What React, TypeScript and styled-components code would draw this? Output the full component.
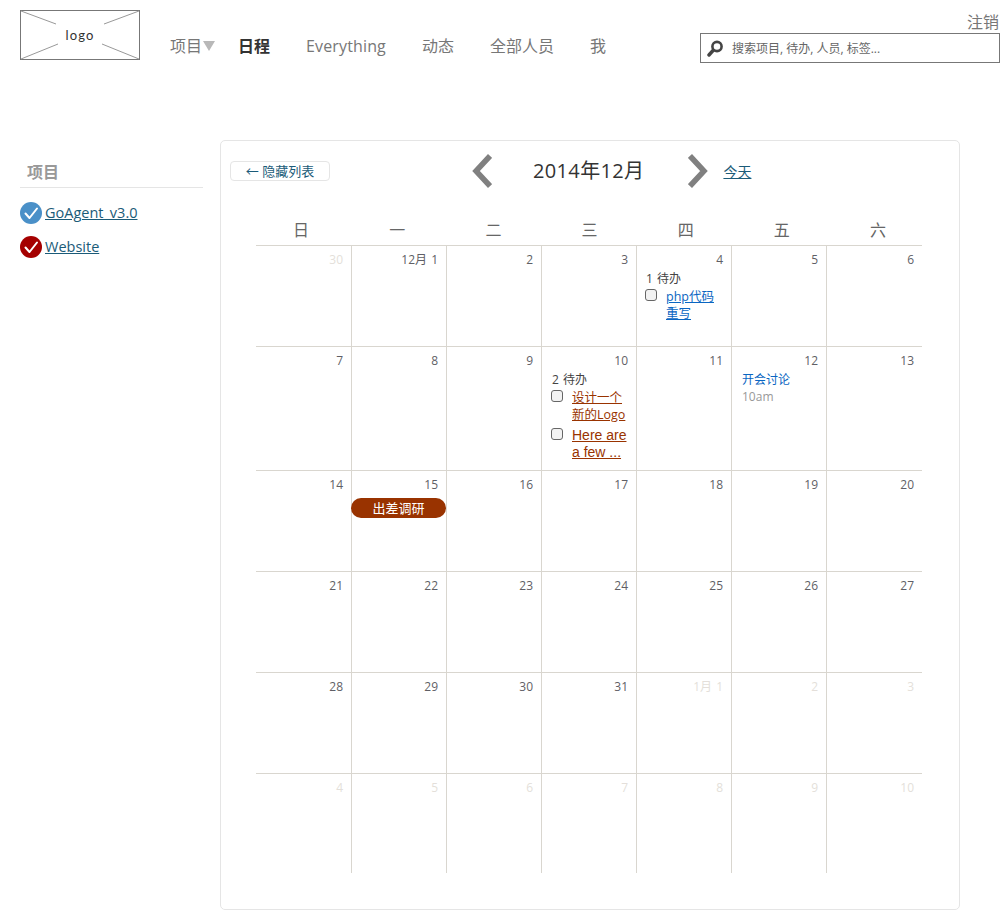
import React from "react";
import styled, { createGlobalStyle } from "styled-components";

const Global = createGlobalStyle`
  html, body { margin: 0; padding: 0; background: #fff; }
  body { font-family: "Open Sans", "Noto Sans CJK SC", sans-serif; color: #333; }
`;

const Page = styled.div`
  width: 1000px;
  height: 910px;
  overflow: hidden;
`;

const Header = styled.header`
  display: flex;
  height: 140px;
  box-sizing: border-box;
  padding: 10px 0 0 20px;
`;

const Logo = styled.div`
  position: relative;
  width: 120px;
  height: 50px;
  display: flex;
  align-items: center;
  justify-content: center;
  font-family: "Lato", "Open Sans", sans-serif;
  font-size: 13px;
  letter-spacing: 1.2px;
  color: #333;
  svg { position: absolute; inset: 0; }
  span { position: relative; margin-top: -1px; }
`;

const Nav = styled.nav`
  display: flex;
  gap: 36px;
  align-items: center;
  height: 24px;
  margin: 24px 0 0 30px;
`;

const NavItem = styled.a<{ $active?: boolean }>`
  font-size: 16px;
  line-height: 24px;
  color: ${(p) => (p.$active ? "#333" : "#777")};
  font-weight: ${(p) => (p.$active ? 700 : 400)};
`;

const NavLatin = styled(NavItem)`
  letter-spacing: 0.14px;
`;

const NavDrop = styled(NavItem)`
  display: flex;
  align-items: center;
  margin-right: -13px;
  &::after {
    content: "";
    width: 0;
    height: 0;
    margin-left: 1px;
    border-left: 6px solid transparent;
    border-right: 6px solid transparent;
    border-top: 10px solid #b8b8b8;
  }
`;

const Account = styled.div`
  margin-left: auto;
  width: 300px;
  display: flex;
  flex-direction: column;
  align-items: flex-end;
  margin-top: 2px;
`;

const Logout = styled.a`
  font-size: 16px;
  line-height: 20px;
  color: #777;
  margin-right: 1px;
`;

const Search = styled.div`
  width: 300px;
  height: 30px;
  margin-top: 1px;
  box-sizing: border-box;
  border: 1px solid #777;
  display: flex;
  align-items: center;
  padding-left: 6px;
  gap: 9px;
`;

const SearchText = styled.span`
  font-size: 12px;
  color: #666;
`;

const Body = styled.main`
  display: flex;
  padding-left: 20px;
`;

const Sidebar = styled.aside`
  width: 183px;
  margin-right: 17px;
  padding-top: 20px;
  flex: none;
`;

const SideTitle = styled.h2`
  margin: 0;
  padding: 0 0 3px 7px;
  font-size: 16px;
  line-height: 24px;
  font-weight: 700;
  color: #999;
  border-bottom: 1px solid #e5e5e5;
`;

const ProjectList = styled.ul`
  list-style: none;
  margin: 14px 0 0;
  padding: 0;
  display: flex;
  flex-direction: column;
  gap: 12px;
`;

const Project = styled.li`
  display: flex;
  align-items: center;
  gap: 3px;
  height: 22px;
`;

const TealLink = styled.a`
  color: #1b5b78;
  text-decoration: underline;
`;

const ProjectLink = styled(TealLink)`
  font-size: 14.5px;
  line-height: 20px;
`;

const Panel = styled.section`
  width: 740px;
  height: 770px;
  box-sizing: border-box;
  border: 1px solid #e5e5e5;
  border-radius: 5px;
  padding: 13px 0 0 9px;
`;

const Toolbar = styled.div`
  display: flex;
  align-items: center;
  height: 34px;
`;

const HideButton = styled.button`
  width: 100px;
  height: 20px;
  padding: 1px 0 0;
  margin-right: 142px;
  background: #fff;
  border: 1px solid #e5e5e5;
  border-radius: 4px;
  font: inherit;
  font-size: 13px;
  line-height: 17px;
  color: #1b5b78;
`;

const MonthTitle = styled.h1`
  margin: 0;
  padding: 0 44px 0 41px;
  font-size: 20px;
  line-height: 30px;
  font-weight: 400;
  letter-spacing: 0.35px;
  color: #333;
`;

const TodayLink = styled(TealLink)`
  margin-left: 15px;
  font-size: 14px;
`;

const Calendar = styled.div`
  margin: 29px 0 0 26px;
  width: 666px;
`;

const Weekdays = styled.div`
  display: grid;
  grid-template-columns: repeat(7, 96.17px);
  height: 28px;
  margin-left: -3px;
`;

const Weekday = styled.div`
  text-align: center;
  font-size: 16px;
  line-height: 26px;
  color: #666;
`;

const Grid = styled.div`
  display: grid;
  grid-template-columns: repeat(6, 95px) 96px;
  grid-template-rows: 101px 124px 101px 101px 101px 100px;
`;

const Cell = styled.div`
  box-sizing: border-box;
  min-width: 0;
  border-top: 1px solid #d9d6cf;
  border-left: 1px solid #d9d6cf;
  &:nth-child(7n + 1) { border-left: none; }
`;

const DayNum = styled.div<{ $muted?: boolean }>`
  padding: 6px 8px 0 0;
  text-align: right;
  font-size: 12px;
  line-height: 16px;
  word-spacing: 1px;
  color: ${(p) => (p.$muted ? "#e4dfda" : "#5f5f66")};
`;

const TodoCount = styled.div<{ $indent: number }>`
  margin: 2px 0 0 ${(p) => p.$indent + 1}px;
  font-size: 12px;
  line-height: 17px;
  word-spacing: 1px;
  color: #444;
`;

const Todo = styled.div<{ $indent: number }>`
  display: flex;
  gap: 9px;
  padding-left: ${(p) => p.$indent}px;
  margin-top: 1px;
  & + & { margin-top: 4px; }
`;

const Check = styled.input`
  appearance: none;
  flex: none;
  width: 12px;
  height: 12px;
  margin: 1px 0 0;
  box-sizing: border-box;
  border: 1px solid #666;
  border-radius: 3px;
  background: #f2f2f2;
`;

const TodoLink = styled.a<{ $tone: string }>`
  font-size: 12.5px;
  line-height: 17px;
  color: ${(p) => p.$tone};
  text-decoration: underline;
  width: 56px;
`;

const LatinTodo = styled(TodoLink)`
  font-family: "Liberation Sans", sans-serif;
  font-size: 14px;
`;

const EventTitle = styled.div`
  margin: 2px 0 0 10px;
  font-size: 12px;
  line-height: 17px;
  color: #0a66c2;
`;

const EventTime = styled.div`
  margin-left: 10px;
  font-size: 12px;
  line-height: 17px;
  color: #999;
`;

const Pill = styled.div`
  position: relative;
  width: 95px;
  height: 20px;
  margin: 5px 0 0 -1px;
  border-radius: 10px;
  background: #993300;
  color: #fff;
  font-size: 13px;
  line-height: 20px;
  text-align: center;
`;

const DoneIcon = ({ color }: { color: string }) => (
  <svg width="22" height="22" viewBox="0 0 22 22" aria-hidden="true">
    <circle cx="11" cy="11" r="11" fill={color} />
    <path d="M5.5 11.5 L9.5 16 L17 6.5" fill="none" stroke="#fff" strokeWidth="2" strokeLinecap="round" strokeLinejoin="round" />
  </svg>
);

const Chevron = ({ dir }: { dir: "left" | "right" }) => (
  <svg width="20" height="34" viewBox="0 0 20 34" aria-hidden="true">
    <path
      d={dir === "left" ? "M18 2 L4 17 L18 32" : "M2 2 L16 17 L2 32"}
      fill="none"
      stroke="#808080"
      strokeWidth="5.5"
    />
  </svg>
);

const weekdays = ["日", "一", "二", "三", "四", "五", "六"];

type Day = { label: string; muted?: boolean; content?: React.ReactNode };

const days: Day[] = [
  { label: "30", muted: true },
  { label: "12月 1" },
  { label: "2" },
  { label: "3" },
  {
    label: "4",
    content: (
      <>
        <TodoCount $indent={8}>1 待办</TodoCount>
        <Todo $indent={8}>
          <Check type="checkbox" />
          <TodoLink $tone="#0a66c2">php代码重写</TodoLink>
        </Todo>
      </>
    ),
  },
  { label: "5" },
  { label: "6" },
  { label: "7" },
  { label: "8" },
  { label: "9" },
  {
    label: "10",
    content: (
      <>
        <TodoCount $indent={9}>2 待办</TodoCount>
        <Todo $indent={9}>
          <Check type="checkbox" />
          <TodoLink $tone="#993300">设计一个新的Logo</TodoLink>
        </Todo>
        <Todo $indent={9}>
          <Check type="checkbox" />
          <LatinTodo $tone="#993300">Here are a few ...</LatinTodo>
        </Todo>
      </>
    ),
  },
  { label: "11" },
  {
    label: "12",
    content: (
      <>
        <EventTitle>开会讨论</EventTitle>
        <EventTime>10am</EventTime>
      </>
    ),
  },
  { label: "13" },
  { label: "14" },
  { label: "15", content: <Pill>出差调研</Pill> },
  ...["16", "17", "18", "19", "20", "21", "22", "23", "24", "25", "26", "27", "28", "29", "30", "31"].map((label) => ({ label })),
  { label: "1月 1", muted: true },
  ...["2", "3", "4", "5", "6", "7", "8", "9", "10"].map((label) => ({ label, muted: true })),
];

export default function App() {
  return (
    <Page>
      <Global />
      <Header>
        <Logo>
          <svg width="120" height="50" viewBox="0 0 120 50" aria-hidden="true">
            <rect x="0.5" y="0.5" width="119" height="49" fill="none" stroke="#777" />
            <path d="M1 1 L36 14 M119 1 L84 14 M1 49 L38 34 M119 49 L82 34" fill="none" stroke="#999" />
          </svg>
          <span>logo</span>
        </Logo>
        <Nav>
          <NavDrop>项目</NavDrop>
          <NavItem $active>日程</NavItem>
          <NavLatin>Everything</NavLatin>
          <NavItem>动态</NavItem>
          <NavItem>全部人员</NavItem>
          <NavItem>我</NavItem>
        </Nav>
        <Account>
          <Logout>注销</Logout>
          <Search>
            <svg width="16" height="17" viewBox="0 0 16 17" aria-hidden="true">
              <circle cx="10" cy="6.5" r="4.6" fill="none" stroke="#444" strokeWidth="2.6" />
              <path d="M6 10.5 L2 15" stroke="#444" strokeWidth="3.4" strokeLinecap="round" />
            </svg>
            <SearchText>搜索项目, 待办, 人员, 标签...</SearchText>
          </Search>
        </Account>
      </Header>
      <Body>
        <Sidebar>
          <SideTitle>项目</SideTitle>
          <ProjectList>
            <Project>
              <DoneIcon color="#4a90c8" />
              <ProjectLink>GoAgent_v3.0</ProjectLink>
            </Project>
            <Project>
              <DoneIcon color="#a50000" />
              <ProjectLink>Website</ProjectLink>
            </Project>
          </ProjectList>
        </Sidebar>
        <Panel>
          <Toolbar>
            <HideButton>← 隐藏列表</HideButton>
            <Chevron dir="left" />
            <MonthTitle>2014年12月</MonthTitle>
            <Chevron dir="right" />
            <TodayLink>今天</TodayLink>
          </Toolbar>
          <Calendar>
            <Weekdays>
              {weekdays.map((d) => (
                <Weekday key={d}>{d}</Weekday>
              ))}
            </Weekdays>
            <Grid>
              {days.map((d, i) => (
                <Cell key={i}>
                  <DayNum $muted={d.muted}>{d.label}</DayNum>
                  {d.content}
                </Cell>
              ))}
            </Grid>
          </Calendar>
        </Panel>
      </Body>
    </Page>
  );
}
